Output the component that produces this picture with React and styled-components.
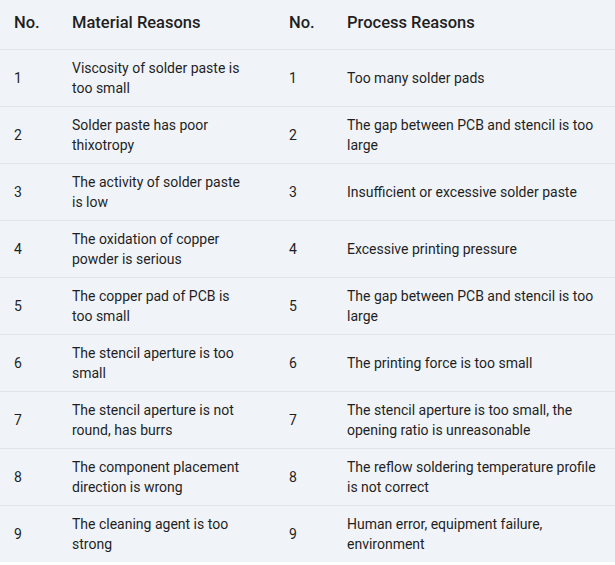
import styled, { createGlobalStyle } from "styled-components";

const GlobalStyle = createGlobalStyle`
  body {
    margin: 0;
    background: #ffffff;
    font-family: Roboto, "Liberation Sans", Arial, sans-serif;
  }
`;

const rows = [
  ["Viscosity of solder paste is too small", "Too many solder pads"],
  ["Solder paste has poor thixotropy", "The gap between PCB and stencil is too large"],
  ["The activity of solder paste is low", "Insufficient or excessive solder paste"],
  ["The oxidation of copper powder is serious", "Excessive printing pressure"],
  ["The copper pad of PCB is too small", "The gap between PCB and stencil is too large"],
  ["The stencil aperture is too small", "The printing force is too small"],
  ["The stencil aperture is not round, has burrs", "The stencil aperture is too small, the opening ratio is unreasonable"],
  ["The component placement direction is wrong", "The reflow soldering temperature profile is not correct"],
  ["The cleaning agent is too strong", "Human error, equipment failure, environment"],
];

const Table = styled.table`
  width: 615px;
  border-collapse: collapse;
  table-layout: fixed;
  background: #f0f4f9;
  color: #1f1f1f;
`;

const HeadCell = styled.th`
  height: 45px;
  padding: 0 ${(p) => p.$padRight || 12}px 4px 14px;
  text-align: left;
  font-size: 16.5px;
  font-weight: 500;
  border-bottom: 1px solid #e1e5ea;
`;

const Cell = styled.td`
  height: 56px;
  padding: 0 ${(p) => p.$padRight || 12}px 0 14px;
  font-size: 14px;
  line-height: 20px;
  border-bottom: 1px solid #e1e5ea;
`;

const Row = styled.tr`
  &:last-child td {
    border-bottom: 2px solid #ffffff;
  }
`;

export default function App() {
  return (
    <>
      <GlobalStyle />
      <Table>
        <colgroup>
          <col style={{ width: 58 }} />
          <col style={{ width: 217 }} />
          <col style={{ width: 58 }} />
          <col style={{ width: 282 }} />
        </colgroup>
        <thead>
          <tr>
            <HeadCell>No.</HeadCell>
            <HeadCell $padRight={28}>Material Reasons</HeadCell>
            <HeadCell>No.</HeadCell>
            <HeadCell $padRight={8}>Process Reasons</HeadCell>
          </tr>
        </thead>
        <tbody>
          {rows.map(([material, process], i) => (
            <Row key={i}>
              <Cell>{i + 1}</Cell>
              <Cell $padRight={28}>{material}</Cell>
              <Cell>{i + 1}</Cell>
              <Cell $padRight={8}>{process}</Cell>
            </Row>
          ))}
        </tbody>
      </Table>
    </>
  );
}
